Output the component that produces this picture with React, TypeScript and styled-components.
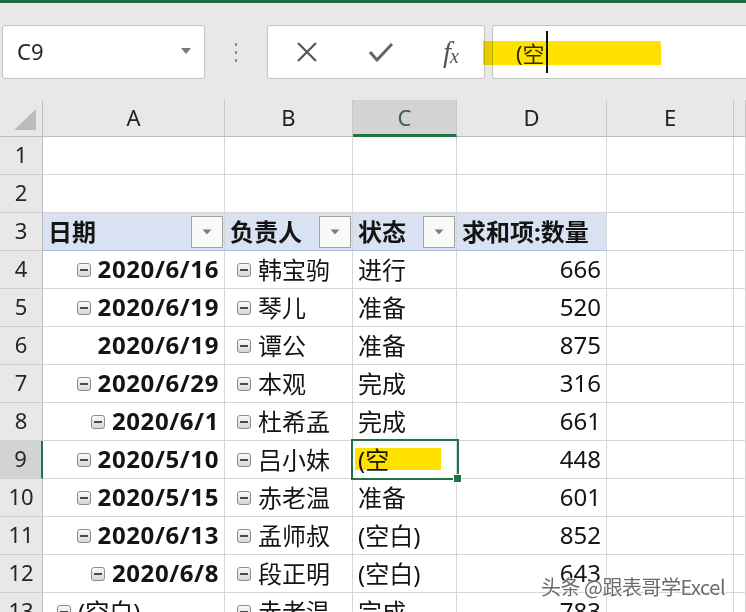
import React from 'react'
import styled, { createGlobalStyle } from 'styled-components'

const GlobalStyle = createGlobalStyle`
  html, body {
    margin: 0;
    padding: 0;
    background: #ffffff;
    overflow: hidden;
  }
  body {
    font-family: "Noto Sans", "Noto Sans CJK SC", sans-serif;
    color: #1f1f1f;
  }
  * {
    box-sizing: border-box;
  }
`

const GREEN = '#217346'
const GRID = '#d6d6d6'

const Page = styled.div`
  width: 746px;
  height: 612px;
  position: relative;
  overflow: hidden;
`

const TopStripe = styled.div`
  height: 3px;
  background: #1d6b40;
`

const FormulaBar = styled.div`
  height: 97px;
  background: #e8e8e8;
  display: flex;
  align-items: flex-start;
  padding-top: 22px;
  position: relative;
`

const NameBox = styled.div`
  margin-left: 2px;
  width: 203px;
  height: 54px;
  background: #fff;
  border: 1px solid #c4c4c4;
  border-radius: 3px;
  display: flex;
  align-items: center;
  justify-content: space-between;
  padding: 0 12px 2px 14px;
  font-size: 22px;
  color: #262626;
`

const Dots = styled.div`
  width: 62px;
  height: 54px;
  display: flex;
  flex-direction: column;
  align-items: center;
  justify-content: center;
  gap: 5px;
  span {
    width: 2px;
    height: 3px;
    background: #8a8a8a;
  }
`

const ButtonsBox = styled.div`
  width: 218px;
  height: 54px;
  background: #fff;
  border: 1px solid #c4c4c4;
  border-radius: 3px;
  display: grid;
  grid-template-columns: 78px 70px 70px;
  align-items: center;
  justify-items: center;
`

const Fx = styled.span`
  font-family: "Liberation Serif", serif;
  font-style: italic;
  font-size: 29px;
  color: #555;
  line-height: 1;
  sub {
    font-size: 20px;
    vertical-align: -1px;
    margin-left: -1px;
  }
`

const FormulaBox = styled.div`
  margin-left: 7px;
  flex: 1;
  height: 54px;
  background: #fff;
  border: 1px solid #c4c4c4;
  border-right: none;
  border-radius: 3px 0 0 3px;
  display: flex;
  align-items: center;
  padding-left: 23px;
  font-size: 22px;
  color: #333;
  position: relative;
`

const FormulaText = styled.span`
  position: relative;
  z-index: 1;
  display: inline-flex;
  align-items: center;
`

const Caret = styled.span`
  display: inline-block;
  width: 2px;
  height: 42px;
  background: #111;
  margin-left: 1px;
`

const Marker = styled.div<{ $left: number; $top: number; $w: number; $h: number }>`
  position: absolute;
  left: ${({ $left }) => $left}px;
  top: ${({ $top }) => $top}px;
  width: ${({ $w }) => $w}px;
  height: ${({ $h }) => $h}px;
  background: #ffe200;
  mix-blend-mode: multiply;
  pointer-events: none;
  z-index: 2;
`

const Sheet = styled.div`
  display: grid;
  grid-template-columns: 43px 182px 128px 104px 150px 127px 1fr;
  grid-auto-rows: 38px;
  grid-template-rows: 37px;
`

const Corner = styled.div`
  background: #e8e8e8;
  border-right: 1px solid #bdbdbd;
  border-bottom: 1px solid #bdbdbd;
  display: flex;
  align-items: flex-end;
  justify-content: flex-end;
  padding: 0 6px 6px 0;
`

const ColHead = styled.div<{ $active?: boolean }>`
  background: ${({ $active }) => ($active ? '#d3d3d3' : '#e8e8e8')};
  border-right: 1px solid #c6c6c6;
  border-bottom: ${({ $active }) => ($active ? `3px solid ${GREEN}` : '1px solid #bdbdbd')};
  display: flex;
  align-items: center;
  justify-content: center;
  font-size: 22px;
  color: ${({ $active }) => ($active ? '#3f5f4c' : '#222')};
  padding-bottom: ${({ $active }) => ($active ? '0' : '2px')};
`

const RowHead = styled.div<{ $active?: boolean }>`
  background: ${({ $active }) => ($active ? '#d3d3d3' : '#e8e8e8')};
  border-right: ${({ $active }) => ($active ? `2px solid ${GREEN}` : '1px solid #bdbdbd')};
  border-bottom: 1px solid #cfcfcf;
  display: flex;
  align-items: center;
  justify-content: center;
  font-size: 22px;
  color: #262626;
  padding-bottom: 3px;
`

const Cell = styled.div<{ $align?: 'left' | 'right'; $bold?: boolean; $head?: boolean; $indent?: number; $line?: string }>`
  position: relative;
  background: ${({ $head }) => ($head ? '#d9e2f3' : '#fff')};
  border-right: 1px solid ${GRID};
  border-bottom: 1px solid ${({ $line }) => $line || GRID};
  display: flex;
  align-items: center;
  justify-content: ${({ $align }) => ($align === 'right' ? 'flex-end' : 'flex-start')};
  padding: 0 ${({ $align }) => ($align === 'right' ? '5px' : '2px')} 2px ${({ $indent }) => $indent ?? 5}px;
  font-size: 24px;
  font-weight: ${({ $bold }) => ($bold ? 700 : 400)};
  letter-spacing: ${({ $bold }) => ($bold ? '0.6px' : '0')};
  white-space: nowrap;
  color: #141414;
`

const HeadLabel = styled.span`
  flex: 1;
  font-weight: 700;
`

const FilterBtn = styled.div`
  width: 32px;
  height: 32px;
  margin-right: -1px;
  margin-top: 2px;
  background: #f9f9f9;
  border: 1px solid #a3a3a3;
  display: flex;
  align-items: center;
  justify-content: center;
`

const Collapse = styled.span`
  width: 14px;
  height: 14px;
  flex: none;
  border: 1px solid #8d8d8d;
  border-radius: 3px;
  background: linear-gradient(#fafafa, #d6d6d6);
  display: inline-flex;
  align-items: center;
  justify-content: center;
  margin: 2px 7px 0 0;
  &::before {
    content: '';
    width: 8px;
    height: 2px;
    background: #4a4a4a;
  }
`

const Selection = styled.div`
  position: absolute;
  left: -2px;
  top: -2px;
  right: -3px;
  bottom: -2px;
  border: 2px solid ${GREEN};
  pointer-events: none;
  z-index: 3;
  &::after {
    content: '';
    position: absolute;
    right: -5px;
    bottom: -5px;
    width: 7px;
    height: 7px;
    background: ${GREEN};
    border: 1px solid #fff;
  }
`

const Watermark = styled.div`
  position: absolute;
  left: 541px;
  top: 572px;
  font-family: "Noto Sans CJK SC", sans-serif;
  font-size: 20px;
  color: rgba(70, 70, 70, 0.8);
  text-shadow: 0 0 2px #fff, 0 0 2px #fff, 1px 1px 0 #fff;
  letter-spacing: -0.5px;
  z-index: 5;
`

const Tri = () => (
  <svg width="12" height="8" viewBox="0 0 12 8">
    <path d="M1 1 L11 1 L6 7 Z" fill="#7a7a7a" />
  </svg>
)

const SmallTri = () => (
  <svg width="10" height="6" viewBox="0 0 10 6">
    <path d="M0.5 0.5 L9.5 0.5 L5 5.5 Z" fill="#7d7d7d" />
  </svg>
)

type Row = {
  n: number
  date: string
  dateIcon: boolean
  dateLeft?: boolean
  who: string
  state: string
  qty: string
}

const rows: Row[] = [
  { n: 4, date: '2020/6/16', dateIcon: true, who: '韩宝驹', state: '进行', qty: '666' },
  { n: 5, date: '2020/6/19', dateIcon: true, who: '琴儿', state: '准备', qty: '520' },
  { n: 6, date: '2020/6/19', dateIcon: false, who: '谭公', state: '准备', qty: '875' },
  { n: 7, date: '2020/6/29', dateIcon: true, who: '本观', state: '完成', qty: '316' },
  { n: 8, date: '2020/6/1', dateIcon: true, who: '杜希孟', state: '完成', qty: '661' },
  { n: 9, date: '2020/5/10', dateIcon: true, who: '吕小妹', state: '(空', qty: '448' },
  { n: 10, date: '2020/5/15', dateIcon: true, who: '赤老温', state: '准备', qty: '601' },
  { n: 11, date: '2020/6/13', dateIcon: true, who: '孟师叔', state: '(空白)', qty: '852' },
  { n: 12, date: '2020/6/8', dateIcon: true, who: '段正明', state: '(空白)', qty: '643' },
  { n: 13, date: '(空白)', dateIcon: true, dateLeft: true, who: '赤老温', state: '完成', qty: '783' },
]

const cols = ['A', 'B', 'C', 'D', 'E', '']

const App: React.FC = () => {
  return (
    <Page>
      <GlobalStyle />
      <TopStripe />
      <FormulaBar>
        <NameBox>
          <span>C9</span>
          <Tri />
        </NameBox>
        <Dots>
          <span />
          <span />
          <span />
        </Dots>
        <ButtonsBox>
          <svg width="22" height="22" viewBox="0 0 22 22">
            <path d="M2 2 L20 20 M20 2 L2 20" stroke="#555" strokeWidth="2.2" fill="none" />
          </svg>
          <svg width="26" height="22" viewBox="0 0 26 22">
            <path d="M2 11 L9 19 L24 3" stroke="#666" strokeWidth="3" fill="none" strokeLinejoin="round" />
          </svg>
          <Fx>
            f<sub>x</sub>
          </Fx>
        </ButtonsBox>
        <FormulaBox>
          <FormulaText>
            (空
            <Caret />
          </FormulaText>
        </FormulaBox>
        <Marker $left={483} $top={38} $w={178} $h={24} />
      </FormulaBar>

      <Sheet>
        <Corner>
          <svg width="22" height="21" viewBox="0 0 22 21">
            <path d="M0 21 L22 0 L22 21 Z" fill="#bcbcbc" />
          </svg>
        </Corner>
        {cols.map((c) => (
          <ColHead key={c || 'x'} $active={c === 'C'}>
            {c}
          </ColHead>
        ))}

        {[1, 2].map((n) => (
          <React.Fragment key={n}>
            <RowHead>{n}</RowHead>
            {cols.map((c) => (
              <Cell key={c || 'x'} />
            ))}
          </React.Fragment>
        ))}

        <RowHead>3</RowHead>
        <Cell $head $line="#aebfdf">
          <HeadLabel>日期</HeadLabel>
          <FilterBtn>
            <SmallTri />
          </FilterBtn>
        </Cell>
        <Cell $head $line="#aebfdf">
          <HeadLabel>负责人</HeadLabel>
          <FilterBtn>
            <SmallTri />
          </FilterBtn>
        </Cell>
        <Cell $head $line="#aebfdf">
          <HeadLabel>状态</HeadLabel>
          <FilterBtn>
            <SmallTri />
          </FilterBtn>
        </Cell>
        <Cell $head $line="#aebfdf">
          <HeadLabel>求和项:数量</HeadLabel>
        </Cell>
        <Cell />
        <Cell />

        {rows.map((r) => (
          <React.Fragment key={r.n}>
            <RowHead $active={r.n === 9}>{r.n}</RowHead>
            <Cell $align={r.dateLeft ? 'left' : 'right'} $bold={!r.dateLeft} $indent={r.dateLeft ? 14 : 5}>
              {r.dateIcon && <Collapse />}
              {r.date}
            </Cell>
            <Cell $indent={12}>
              <Collapse />
              {r.who}
            </Cell>
            <Cell>
              {r.n === 9 && (
                <>
                  <Marker $left={2} $top={7} $w={86} $h={22} />
                  <Selection />
                </>
              )}
              {r.state}
            </Cell>
            <Cell $align="right">{r.qty}</Cell>
            <Cell />
            <Cell />
          </React.Fragment>
        ))}
      </Sheet>

      <Watermark>头条 @跟表哥学Excel</Watermark>
    </Page>
  )
}

export default App
